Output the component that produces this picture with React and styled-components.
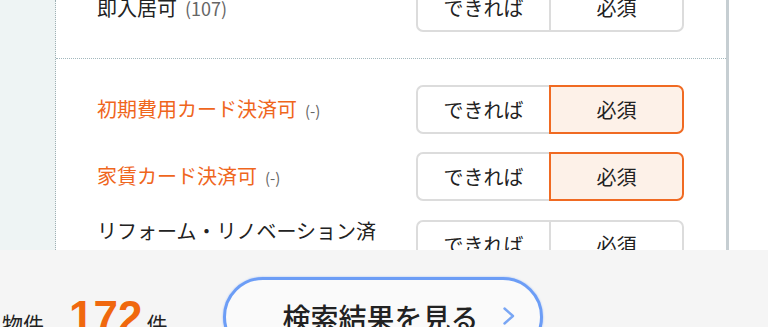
import React from 'react';
import styled, { createGlobalStyle } from 'styled-components';

const GlobalStyle = createGlobalStyle`
  html, body {
    margin: 0;
    padding: 0;
    background: #fff;
  }
  body {
    font-family: "Noto Sans CJK JP", "Noto Sans", sans-serif;
    color: #222;
  }
`;

const Page = styled.div`
  width: 768px;
  height: 327px;
  overflow: hidden;
  display: flex;
  flex-direction: column;
`;

const Main = styled.div`
  height: 250px;
  flex: 0 0 250px;
  overflow: hidden;
  display: flex;
  background: #fff;
`;

const Side = styled.div`
  width: 55px;
  flex: 0 0 55px;
  background: #eef4f4;
  border-right: 1px dotted #9fb0b4;
`;

const Content = styled.div`
  width: 670px;
  flex: 0 0 670px;
  border-right: 3px solid #c6ced2;
`;

// list is scrolled: first row's top is above the viewport
const List = styled.div`
  margin-top: -43px;
`;

const Section = styled.div`
  display: flex;
  flex-direction: column;
  gap: 18px;
  padding: 26px 0;
  border-bottom: ${(p) => (p.$last ? 'none' : '1px dotted #a3b8bd')};
`;

const Row = styled.div`
  display: flex;
  align-items: center;
  justify-content: space-between;
  padding: 0 42px 0 41px;
`;

const Label = styled.div`
  flex: 0 1 290px;
  font-size: 20px;
  line-height: 24px;
  color: ${(p) => (p.$active ? '#ef661d' : '#222')};
`;

const Count = styled.span`
  margin-left: 8px;
  font-size: ${(p) => (p.$small ? '15px' : '18px')};
  color: #666;
`;

const Toggle = styled.div`
  display: flex;
  width: 268px;
  height: 49px;
  flex: 0 0 268px;
`;

const Segment = styled.div`
  box-sizing: border-box;
  display: flex;
  align-items: center;
  justify-content: center;
  font-size: 20px;
  color: #222;
  background: ${(p) => (p.$on ? '#fdf1e8' : '#fff')};
  border: 2px solid ${(p) => (p.$on ? '#f06a22' : '#dcdcdc')};
  ${(p) =>
    p.$left
      ? 'width: 133px; border-right: none; border-radius: 7px 0 0 7px;'
      : 'width: 135px; border-radius: 0 7px 7px 0;'}
`;

const Bar = styled.div`
  flex: 1;
  background: #f5f5f5;
  display: flex;
  align-items: flex-start;
  padding: 27px 0 0 2px;
  gap: 56px;
`;

const Total = styled.div`
  display: flex;
  align-items: baseline;
  margin-top: 19px;
  line-height: 42px;
  font-size: 21px;
  color: #222;
`;

const Num = styled.span`
  margin: 0 4px 0 25px;
  font-family: "Liberation Sans", Arial, sans-serif;
  font-size: 44px;
  font-weight: 700;
  color: #f0680e;
`;

const SearchButton = styled.button`
  position: relative;
  box-sizing: border-box;
  width: 320px;
  height: 80px;
  flex: 0 0 320px;
  border: 3px solid #6c9df6;
  border-radius: 40px;
  box-shadow: 0 0 2px rgba(108, 157, 246, 0.7);
  background: #fafafa;
  display: flex;
  align-items: center;
  justify-content: center;
  padding: 0 6px 0 0;
  font-family: "Noto Sans CJK JP", "Noto Sans", sans-serif;
  font-size: 28px;
  font-weight: 500;
  color: #222;
`;

const Chevron = styled.svg`
  position: absolute;
  right: 24px;
  top: 26px;
`;

const rows = [
  [
    { label: '即入居可', count: '(107)', on: false },
  ],
  [
    { label: '初期費用カード決済可', count: '(-)', small: true, on: true },
    { label: '家賃カード決済可', count: '(-)', small: true, on: true },
    { label: 'リフォーム・リノベーション済', count: '(-)', small: true, on: false },
  ],
];

const FilterRow = ({ label, count, small, on }) => (
  <Row>
    <Label $active={on}>
      {label}
      <Count $small={small}>{count}</Count>
    </Label>
    <Toggle>
      <Segment $left>できれば</Segment>
      <Segment $on={on}>必須</Segment>
    </Toggle>
  </Row>
);

const App = () => (
  <>
    <GlobalStyle />
    <Page>
      <Main>
        <Side />
        <Content>
          <List>
            {rows.map((section, i) => (
              <Section key={i} $last={i === rows.length - 1}>
                {section.map((r) => (
                  <FilterRow key={r.label} {...r} />
                ))}
              </Section>
            ))}
          </List>
        </Content>
      </Main>
      <Bar>
        <Total>
          物件
          <Num>172</Num>
          件
        </Total>
        <SearchButton type="button">
          検索結果を見る
          <Chevron width="14" height="20" viewBox="0 0 14 20">
            <polyline
              points="2.5,2.5 11,10 2.5,17.5"
              fill="none"
              stroke="#79a6f4"
              strokeWidth="2.4"
              strokeLinecap="round"
              strokeLinejoin="round"
            />
          </Chevron>
        </SearchButton>
      </Bar>
    </Page>
  </>
);

export default App;
